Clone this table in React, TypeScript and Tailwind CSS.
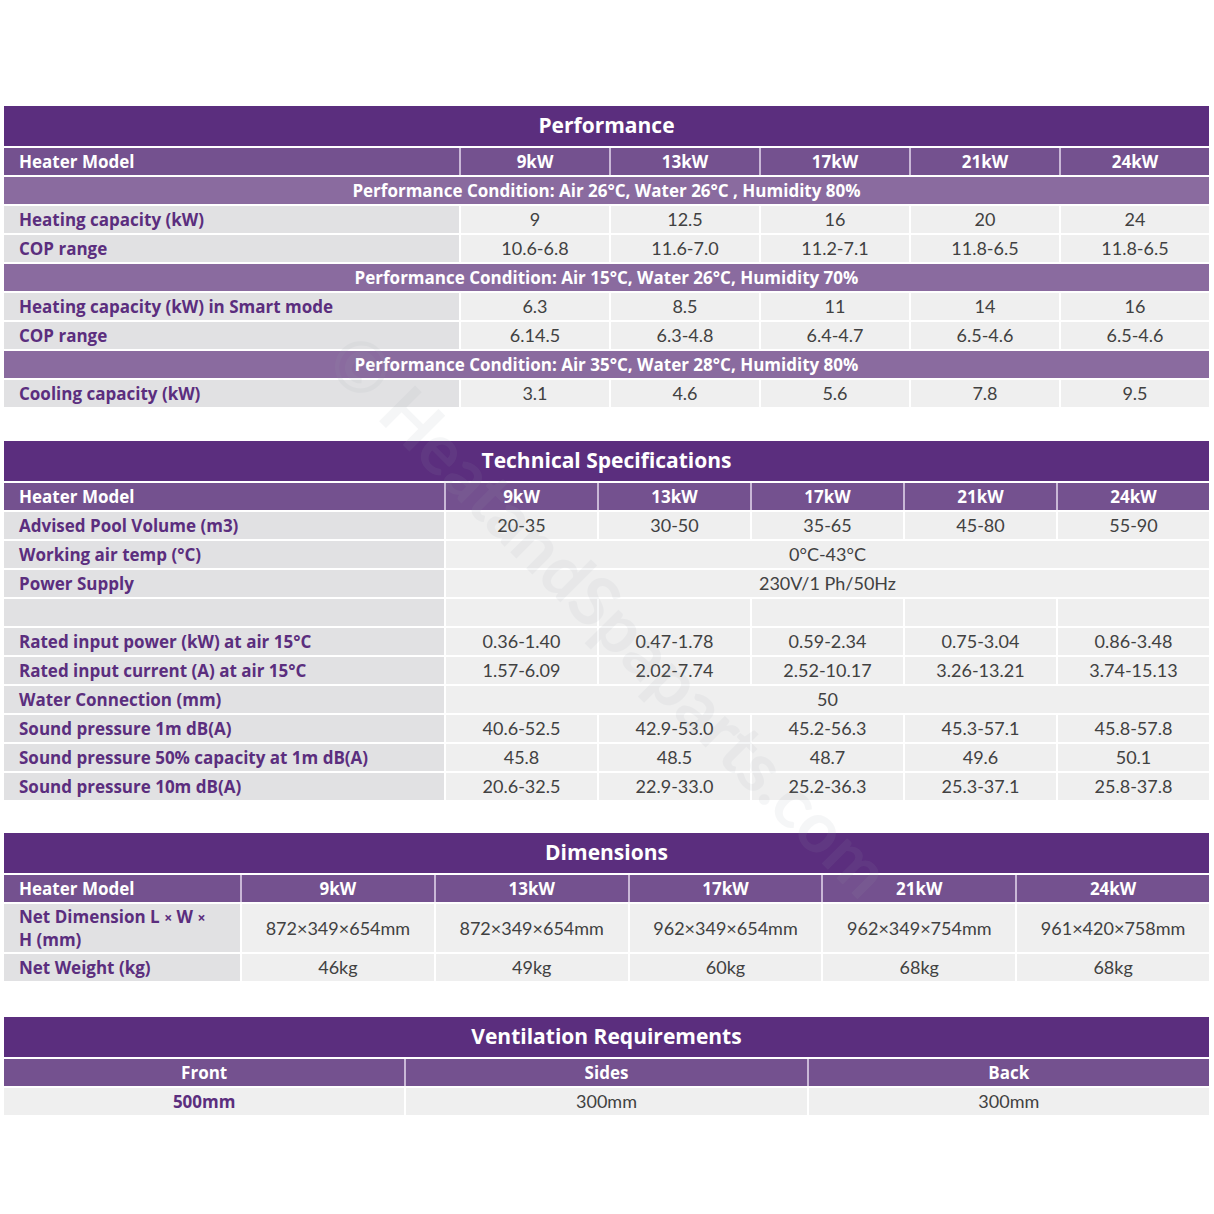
import React from 'react';

const font = { fontFamily: 'Lato, "Noto Sans", sans-serif' };
const heavy = { fontFamily: '"Open Sans", Lato, sans-serif' };

const Title = ({ children }: { children: React.ReactNode }) => (
  <div className="h-[40px] bg-[#5b2e7e] flex items-center justify-center text-white font-bold text-[21px]" style={heavy}>
    {children}
  </div>
);

interface Row {
  label?: React.ReactNode;
  values?: string[];
  span?: string;
  condition?: string;
  tall?: boolean;
}

const SpecTable = ({
  title,
  cols,
  labelWidth,
  rows,
}: {
  title: string;
  cols: string[];
  labelWidth: string;
  rows: Row[];
}) => {
  return (
    <div className="flex flex-col gap-[2px]">
      <Title>{title}</Title>
      <div className={`grid ${labelWidth} gap-x-[2px] h-[27px] bg-[#c9b7d6]`} style={heavy}>
        <div className="bg-[#74518f] flex items-center pl-[15px] text-white font-bold text-[17px]">Heater Model</div>
        {cols.map((c) => (
          <div key={c} className="bg-[#74518f] flex items-center justify-center text-white font-bold text-[17px]">
            {c}
          </div>
        ))}
      </div>
      {rows.map((r, i) => {
        if (r.condition) {
          return (
            <div
              key={i}
              className="h-[27px] bg-[#8a6b9f] flex items-center justify-center text-white font-bold text-[17px]"
              style={heavy}
            >
              {r.condition}
            </div>
          );
        }
        return (
          <div key={i} className={`grid ${labelWidth} gap-x-[2px] ${r.tall ? 'h-[48px]' : 'h-[27px]'}`}>
            <div
              className="bg-[#e1e1e3] flex items-center pl-[15px] pr-2 text-[#5b2e7e] font-bold text-[17px] leading-[22px]"
              style={heavy}
            >
              <span>{r.label}</span>
            </div>
            {r.span !== undefined ? (
              <div className="col-span-5 bg-[#efefef] flex items-center justify-center text-[#414141] text-[18px]">
                {r.span}
              </div>
            ) : (
              (r.values ?? ['', '', '', '', '']).map((v, j) => (
                <div key={j} className="bg-[#efefef] flex items-center justify-center text-[#414141] text-[18px]">
                  {v}
                </div>
              ))
            )}
          </div>
        );
      })}
    </div>
  );
};

const models = ['9kW', '13kW', '17kW', '21kW', '24kW'];

const performance: Row[] = [
  { condition: 'Performance Condition: Air 26°C, Water 26°C , Humidity 80%' },
  { label: 'Heating capacity (kW)', values: ['9', '12.5', '16', '20', '24'] },
  { label: 'COP range', values: ['10.6-6.8', '11.6-7.0', '11.2-7.1', '11.8-6.5', '11.8-6.5'] },
  { condition: 'Performance Condition: Air 15°C, Water 26°C, Humidity 70%' },
  { label: 'Heating capacity (kW) in Smart mode', values: ['6.3', '8.5', '11', '14', '16'] },
  { label: 'COP range', values: ['6.14.5', '6.3-4.8', '6.4-4.7', '6.5-4.6', '6.5-4.6'] },
  { condition: 'Performance Condition: Air 35°C, Water 28°C, Humidity 80%' },
  { label: 'Cooling capacity (kW)', values: ['3.1', '4.6', '5.6', '7.8', '9.5'] },
];

const technical: Row[] = [
  { label: 'Advised Pool Volume (m3)', values: ['20-35', '30-50', '35-65', '45-80', '55-90'] },
  { label: 'Working air temp (°C)', span: '0°C-43°C' },
  { label: 'Power Supply', span: '230V/1 Ph/50Hz' },
  { label: '' },
  { label: 'Rated input power (kW) at air 15°C', values: ['0.36-1.40', '0.47-1.78', '0.59-2.34', '0.75-3.04', '0.86-3.48'] },
  { label: 'Rated input current (A) at air 15°C', values: ['1.57-6.09', '2.02-7.74', '2.52-10.17', '3.26-13.21', '3.74-15.13'] },
  { label: 'Water Connection (mm)', span: '50' },
  { label: 'Sound pressure 1m dB(A)', values: ['40.6-52.5', '42.9-53.0', '45.2-56.3', '45.3-57.1', '45.8-57.8'] },
  { label: 'Sound pressure 50% capacity at 1m dB(A)', values: ['45.8', '48.5', '48.7', '49.6', '50.1'] },
  { label: 'Sound pressure 10m dB(A)', values: ['20.6-32.5', '22.9-33.0', '25.2-36.3', '25.3-37.1', '25.8-37.8'] },
];

const dimensions: Row[] = [
  {
    label: (
      <>
        Net Dimension L <span className="text-[14px]">×</span> W <span className="text-[14px]">×</span>
        <br />H (mm)
      </>
    ),
    tall: true,
    values: ['872×349×654mm', '872×349×654mm', '962×349×654mm', '962×349×754mm', '961×420×758mm'],
  },
  { label: 'Net Weight (kg)', values: ['46kg', '49kg', '60kg', '68kg', '68kg'] },
];

const Ventilation = () => (
  <div className="flex flex-col gap-[2px]">
    <Title>Ventilation Requirements</Title>
    <div className="grid grid-cols-3 gap-x-[2px] h-[27px] bg-[#c9b7d6]" style={heavy}>
      {['Front', 'Sides', 'Back'].map((c) => (
        <div key={c} className="bg-[#74518f] flex items-center justify-center text-white font-bold text-[17px]">
          {c}
        </div>
      ))}
    </div>
    <div className="grid grid-cols-3 gap-x-[2px] h-[27px]">
      <div className="bg-[#efefef] flex items-center justify-center text-[#5b2e7e] font-bold text-[17px]" style={heavy}>
        500mm
      </div>
      <div className="bg-[#efefef] flex items-center justify-center text-[#414141] text-[18px]">300mm</div>
      <div className="bg-[#efefef] flex items-center justify-center text-[#414141] text-[18px]">300mm</div>
    </div>
  </div>
);

export default function App() {
  return (
    <div className="relative w-[1214px] h-[1214px] bg-white overflow-hidden" style={font}>
      <div className="pt-[106px] pl-[4px] w-[1209px] flex flex-col">
        <SpecTable title="Performance" cols={models} labelWidth="grid-cols-[455px_repeat(5,1fr)]" rows={performance} />
        <div className="mt-[34px]">
          <SpecTable title="Technical Specifications" cols={models} labelWidth="grid-cols-[440px_repeat(5,1fr)]" rows={technical} />
        </div>
        <div className="mt-[33px]">
          <SpecTable title="Dimensions" cols={models} labelWidth="grid-cols-[236px_repeat(5,1fr)]" rows={dimensions} />
        </div>
        <div className="mt-[36px]">
          <Ventilation />
        </div>
      </div>
      {/* watermark */}
      <div className="pointer-events-none absolute left-[180px] top-[562px] w-[860px] text-center rotate-45 text-[70px] font-bold text-[#9aa3ad] opacity-[0.09] whitespace-nowrap">
        © HeatandSpaparts.com
      </div>
    </div>
  );
}
